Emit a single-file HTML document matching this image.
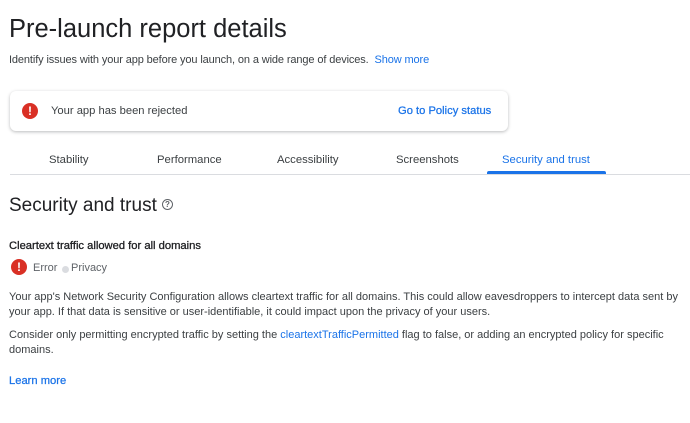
<!DOCTYPE html>
<html><head><meta charset="utf-8"><style>
body{margin:0;width:690px;height:423px;background:#fff;font-family:"Liberation Sans",Arial,sans-serif;color:#202124;position:relative;overflow:hidden}
.a{position:absolute;white-space:nowrap}
.blue{color:#1a73e8}
.ic{position:absolute;width:16px;height:16px;border-radius:50%;background:#d93025;color:#fff;font-size:12px;font-weight:bold;text-align:center;line-height:16px}
</style></head><body>
<div class="a" style="left:9px;top:15px;font-size:25.5px;">Pre-launch report details</div>
<div class="a" style="left:9px;top:54px;font-size:11px;color:#3c4043;letter-spacing:-0.12px">Identify issues with your app before you launch, on a wide range of devices. <span class="blue" style="margin-left:3px">Show more</span></div>
<div class="a" style="left:10px;top:91px;width:498px;height:40px;border-radius:6px;box-shadow:0 1px 3px rgba(60,64,67,.35);background:#fff"></div>
<div class="ic" style="left:22px;top:103px">!</div>
<div class="a" style="left:51px;top:105px;font-size:11.2px;color:#3c4043">Your app has been rejected</div>
<div class="a blue" style="left:398px;top:105px;font-size:11.2px;-webkit-text-stroke:0.25px #1a73e8">Go to Policy status</div>
<div class="a" style="left:49px;top:154px;font-size:11.3px;color:#3c4043">Stability</div>
<div class="a" style="left:157px;top:154px;font-size:11.3px;color:#3c4043">Performance</div>
<div class="a" style="left:277px;top:154px;font-size:11.3px;color:#3c4043">Accessibility</div>
<div class="a" style="left:396px;top:154px;font-size:11.3px;color:#3c4043">Screenshots</div>
<div class="a blue" style="left:502px;top:154px;font-size:11.3px">Security and trust</div>
<div class="a" style="left:10px;top:174px;width:680px;height:1px;background:#dadce0"></div>
<div class="a" style="left:487px;top:171px;width:119px;height:3px;background:#1a73e8;border-radius:2px 2px 0 0"></div>
<div class="a" style="left:9px;top:195px;font-size:19px">Security and trust</div>
<div class="a" style="left:162px;top:199px;width:9px;height:9px;border:1.3px solid #5f6368;border-radius:50%;font-size:8px;line-height:9px;text-align:center;color:#5f6368;font-weight:bold">?</div>
<div class="a" style="left:9px;top:240px;font-size:11.2px;color:#202124;-webkit-text-stroke:0.3px #202124">Cleartext traffic allowed for all domains</div>
<div class="ic" style="left:11px;top:259px">!</div>
<div class="a" style="left:33px;top:262px;font-size:11px;color:#5f6368">Error</div>
<div class="a" style="left:62px;top:266px;width:7px;height:7px;border-radius:50%;background:#dadce0"></div>
<div class="a" style="left:71px;top:262px;font-size:11px;color:#5f6368">Privacy</div>
<div class="a" style="left:9px;top:290px;font-size:11px;line-height:15px;color:#3c4043;white-space:normal;width:680px">Your app's Network Security Configuration allows cleartext traffic for all domains. This could allow eavesdroppers to intercept data sent by your app. If that data is sensitive or user-identifiable, it could impact upon the privacy of your users.</div>
<div class="a" style="left:9px;top:328px;font-size:11px;line-height:15px;color:#3c4043;white-space:normal;width:680px">Consider only permitting encrypted traffic by setting the <span class="blue">cleartextTrafficPermitted</span> flag to false, or adding an encrypted policy for specific domains.</div>
<div class="a blue" style="left:9px;top:375px;font-size:11.2px;-webkit-text-stroke:0.25px #1a73e8">Learn more</div>
</body></html>
